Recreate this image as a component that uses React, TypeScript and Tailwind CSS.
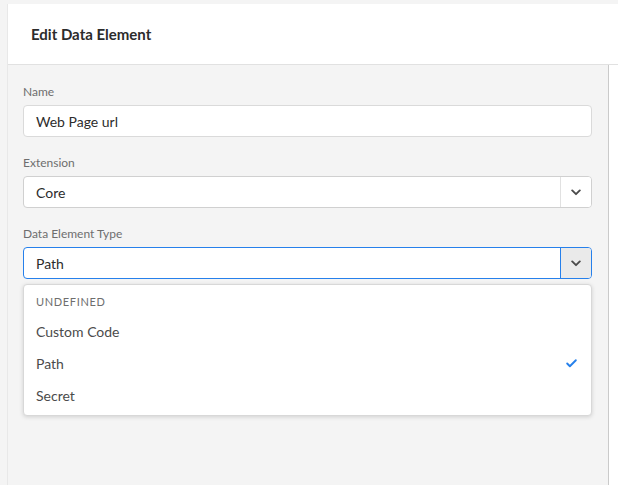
import { Check } from 'lucide-react';

function Chevron() {
  return (
    <svg width="10" height="7" viewBox="0 0 10 7" fill="none">
      <path d="M1.2 1.4 L5 5.2 L8.8 1.4" stroke="#4b4b4b" strokeWidth="1.9" strokeLinecap="round" strokeLinejoin="round" />
    </svg>
  );
}

function Field({ label, children, className = '' }: { label: string; children: React.ReactNode; className?: string }) {
  return (
    <div className={className}>
      <div className="text-[12px] leading-[16px] text-[#6e6e6e] mb-[5px]">{label}</div>
      {children}
    </div>
  );
}

function Select({ value, active = false }: { value: string; active?: boolean }) {
  return (
    <div
      className={`flex h-[32px] rounded-[4px] border bg-white ${active ? 'border-[#2680eb]' : 'border-[#d0d0d0]'}`}
    >
      <div className="flex-1 flex items-center pl-[12px] text-[14px] text-[#2c2c2c]">{value}</div>
      <div
        className={`w-[31px] flex items-center justify-center border-l rounded-r-[3px] ${
          active ? 'border-[#2680eb] bg-[#eaeaea]' : 'border-[#e1e1e1] bg-white'
        }`}
      >
        <Chevron />
      </div>
    </div>
  );
}

export default function App() {
  const options = ['Custom Code', 'Path', 'Secret'];
  return (
    <div className="w-[618px] h-[485px] bg-[#f4f4f4] pt-[4px] pl-[7px] flex flex-col overflow-hidden font-['Lato',sans-serif]">
      <div className="flex-1 flex flex-col border-l border-[#e8e8e8]">
        {/* Header */}
        <header className="h-[61px] bg-white border-b border-[#e1e1e1] flex items-center pl-[23px]">
          <h1 className="text-[15px] font-bold text-[#2c2c2c]">Edit Data Element</h1>
        </header>

        {/* Body */}
        <div className="flex-1 flex">
          <div className="w-[601px] bg-[#f4f4f4] border-r border-[#cacaca] pl-[15px] pr-[16px] pt-[19px]">
            <Field label="Name">
              <div className="h-[32px] rounded-[4px] border border-[#dadada] bg-white flex items-center pl-[12px] text-[14px] text-[#2c2c2c]">
                Web Page url
              </div>
            </Field>

            <Field label="Extension" className="mt-[18px]">
              <Select value="Core" />
            </Field>

            <Field label="Data Element Type" className="mt-[18px]">
              <Select value="Path" active />
            </Field>

            {/* Dropdown menu */}
            <div className="mt-[5px] rounded-[4px] border border-[#d8d8d8] bg-white py-[4px] shadow-[0_1px_4px_rgba(0,0,0,0.15)]">
              <div className="h-[26px] flex items-center pl-[12px] text-[11px] tracking-[0.06em] text-[#6e6e6e]">
                UNDEFINED
              </div>
              {options.map((o) => (
                <div key={o} className="h-[32px] flex items-center justify-between pl-[12px] pr-[13px] text-[14px] text-[#4b4b4b]">
                  <span>{o}</span>
                  {o === 'Path' && <Check className="w-[13px] h-[13px] text-[#2680eb]" strokeWidth={3.5} />}
                </div>
              ))}
            </div>
          </div>
          <div className="flex-1 bg-white" />
        </div>
      </div>
    </div>
  );
}
